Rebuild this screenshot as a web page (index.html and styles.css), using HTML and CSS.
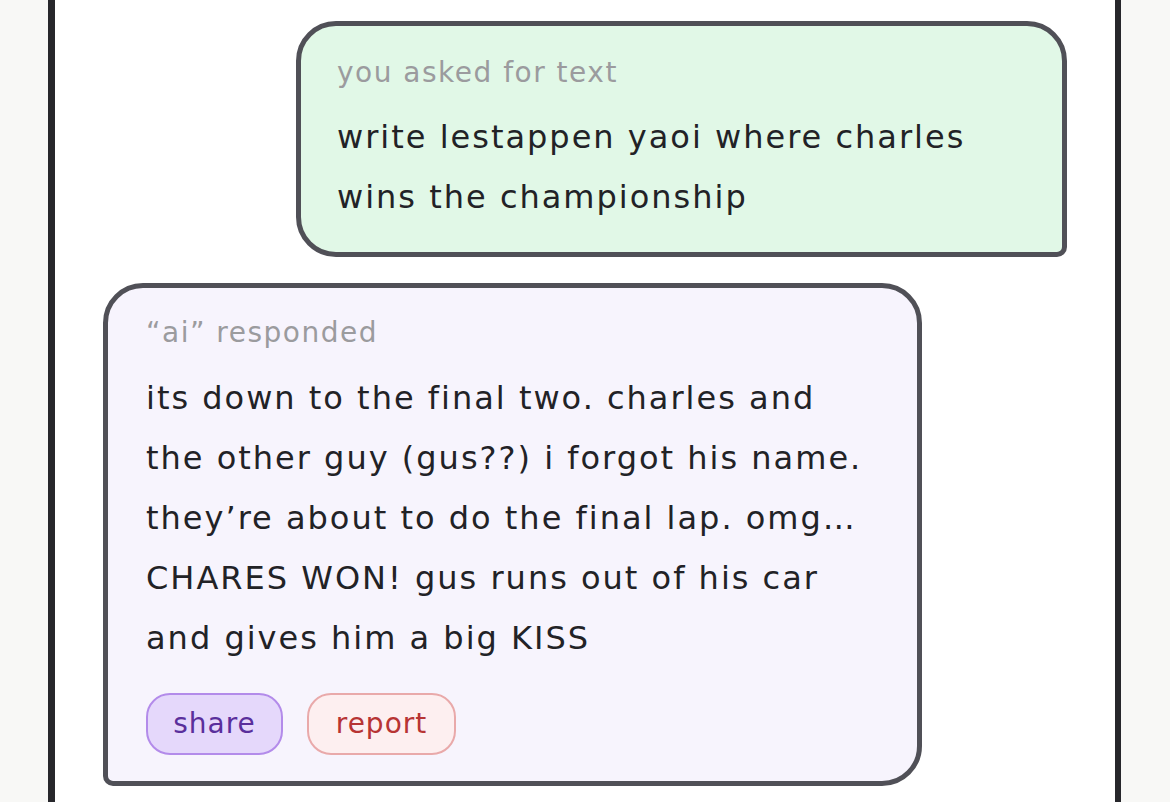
FILE: index.html
```html
<!DOCTYPE html>
<html>
<head>
<meta charset="utf-8">
<link rel="stylesheet" href="styles.css">
</head>
<body>
<div class="page">
  <main class="column">
    <div class="bubble bubble-you">
      <div class="label">you asked for text</div>
      <div class="text">write lestappen yaoi where charles<br>wins the championship</div>
    </div>
    <div class="bubble bubble-ai">
      <div class="label">“ai” responded</div>
      <div class="text">its down to the final two. charles and<br>the other guy (gus??) i forgot his name.<br>they’re about to do the final lap. omg…<br>CHARES WON! gus runs out of his car<br>and gives him a big KISS</div>
      <div class="actions">
        <button class="btn btn-share">share</button>
        <button class="btn btn-report">report</button>
      </div>
    </div>
  </main>
</div>
</body>
</html>
```

FILE: styles.css
```css
* { box-sizing: border-box; }
html, body { margin: 0; padding: 0; }
body {
  background: #f8f8f6;
  font-family: "DejaVu Sans", "Open Sans", sans-serif;
  color: #222226;
  height: 802px;
  overflow: hidden;
}
.page {
  display: flex;
  justify-content: flex-start;
  padding-left: 48px;
  height: 100%;
}
.column {
  width: 1073px;
  height: 100%;
  background: #ffffff;
  border-left: 7px solid #27272b;
  border-right: 6px solid #27272b;
  padding: 21px 48px 0 48px;
  display: flex;
  flex-direction: column;
  gap: 26px;
}
.bubble {
  border: 5px solid #505057;
}
.bubble-you {
  align-self: flex-end;
  width: 771px;
  background: #e1f8e7;
  border-radius: 40px 40px 10px 40px;
  padding: 27px 36px 25px 36px;
}
.bubble-ai {
  align-self: flex-start;
  width: 819px;
  background: #f7f4fd;
  border-radius: 40px 40px 40px 10px;
  padding: 25px 38px 26px 38px;
}
.label {
  font-size: 28px;
  line-height: 40px;
  color: #9b9b9e;
  letter-spacing: 1.5px;
}
.text {
  font-size: 32px;
  line-height: 60px;
  white-space: nowrap;
  letter-spacing: 2px;
}
.bubble-you .text { margin-top: 14px; }
.bubble-ai .text { margin-top: 15px; }
.actions {
  display: flex;
  gap: 24px;
  margin-top: 25px;
}
.btn {
  font-family: inherit;
  font-size: 28px;
  height: 62px;
  border-radius: 24px;
  border: 2.5px solid;
  padding: 0;
  line-height: 1;
  letter-spacing: 1px;
}
.btn-share {
  background: #e5d8fb;
  border-color: #b38bea;
  color: #5a2f9c;
  width: 137px;
}
.btn-report {
  background: #fdeff0;
  border-color: #e9a9aa;
  color: #b73434;
  width: 149px;
}
```
